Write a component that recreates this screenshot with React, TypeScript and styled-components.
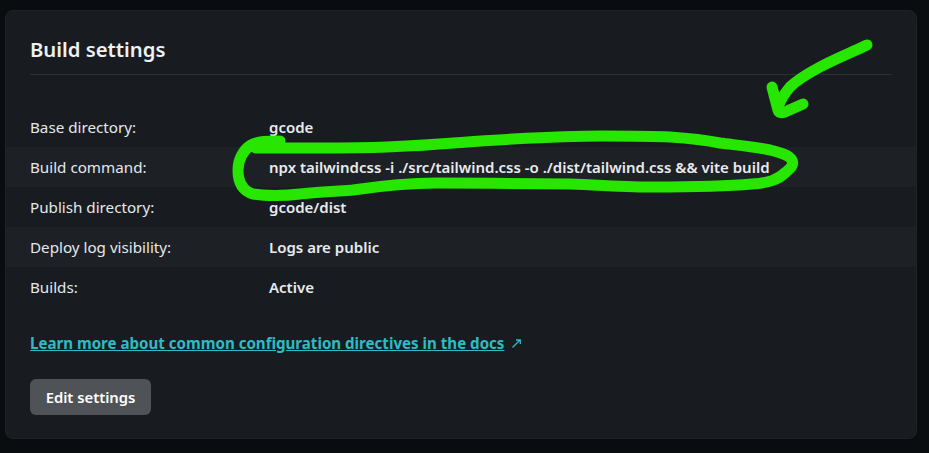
import React from "react";
import styled, { createGlobalStyle } from "styled-components";

const Global = createGlobalStyle`
  html, body { margin: 0; padding: 0; background: #0a0d10; }
  body { font-family: "Noto Sans", "Open Sans", sans-serif; }
`;

const Page = styled.div`
  position: relative;
  width: 929px;
  height: 453px;
  padding: 10px 12px 14px 5px;
  box-sizing: border-box;
  overflow: hidden;
`;

const Card = styled.section`
  height: 429px;
  box-sizing: border-box;
  background: #181c20;
  border: 1px solid #1e2226;
  border-radius: 8px;
  padding-top: 24px;
`;

const Heading = styled.h2`
  margin: 0 24px;
  padding-bottom: 10px;
  height: 29px;
  font-size: 20.3px;
  line-height: 29px;
  font-weight: 600;
  color: #eef1f4;
  border-bottom: 1px solid #2c3034;
`;

const List = styled.dl`
  margin: 32px 0 0;
`;

const Row = styled.div`
  display: grid;
  grid-template-columns: 239px 1fr;
  align-items: center;
  height: 40px;
  padding-left: 24px;
  background: ${(p: { $striped?: boolean }) => (p.$striped ? "#1d2125" : "transparent")};
`;

const Label = styled.dt`
  font-size: 15.2px;
  color: #e4e8ec;
`;

const Value = styled.dd`
  margin: 0;
  font-size: 15px;
  font-weight: 600;
  color: #e8ebee;
`;

const LinkRow = styled.p`
  display: flex;
  align-items: center;
  gap: 8px;
  margin: 26px 24px 0;
  height: 20px;
`;

const DocsLink = styled.a`
  font-size: 15.1px;
  font-weight: 700;
  color: #2cbcc4;
  text-decoration: underline;
`;

const ExternalIcon = styled.svg`
  width: 9px;
  height: 9px;
  color: #2cbcc4;
`;

const EditButton = styled.button`
  display: block;
  margin: 26px 24px 0;
  width: 121px;
  height: 36px;
  padding: 0;
  border: 0;
  border-radius: 6px;
  background: #4f5257;
  color: #fff;
  font-family: inherit;
  font-size: 14.8px;
  font-weight: 600;
`;

const Annotation = styled.svg`
  position: absolute;
  left: 0;
  top: 0;
  width: 929px;
  height: 453px;
  pointer-events: none;
`;

const rows = [
  ["Base directory:", "gcode"],
  ["Build command:", "npx tailwindcss -i ./src/tailwind.css -o ./dist/tailwind.css && vite build"],
  ["Publish directory:", "gcode/dist"],
  ["Deploy log visibility:", "Logs are public"],
  ["Builds:", "Active"],
];

export default function App() {
  return (
    <Page>
      <Global />
      <Card>
        <Heading>Build settings</Heading>
        <List>
          {rows.map(([label, value], i) => (
            <Row key={label} $striped={i % 2 === 1}>
              <Label>{label}</Label>
              <Value>{value}</Value>
            </Row>
          ))}
        </List>
        <LinkRow>
          <DocsLink href="#">Learn more about common configuration directives in the docs</DocsLink>
          <ExternalIcon viewBox="0 0 9 9" fill="none" stroke="currentColor" strokeWidth="1.3">
            <path d="M0.5 8.5 L8 1 M4 1 H8.3 V5" />
          </ExternalIcon>
        </LinkRow>
        <EditButton>Edit settings</EditButton>
      </Card>
      <Annotation viewBox="0 0 929 453" fill="none" stroke="#27e600" strokeWidth="11" strokeLinecap="round" strokeLinejoin="round">
        <path d="M280 141 C268 141 258 141 251 145 C243 150 238 160 238 170 C238 183 243 191 253 194 C264 196 285 196 300 194 C320 192 340 191 353 190 C380 186 410 183 437 183 C480 183 530 184 570 184 C600 185 630 187 653 187 C690 187 730 186 752 184 C768 183 778 180 786 172 C791 168 794 165 792 160 C789 155 782 153 770 150 C750 146 735 145 720 143 C700 139 685 138 670 137 C650 136 625 136 603 136 C580 136 550 137 513 139 C490 140 470 142 453 143 C430 145 410 146 387 147 C360 148 340 148 320 148 C300 148 275 148 256 148" />
        <path d="M867 45 C850 53 835 59 820 67 C805 75 797 80 790 87 C784 94 780 100 778 108" />
        <path d="M772 87 L778 110 Q779 114 785 112 L803 104" />
      </Annotation>
    </Page>
  );
}
